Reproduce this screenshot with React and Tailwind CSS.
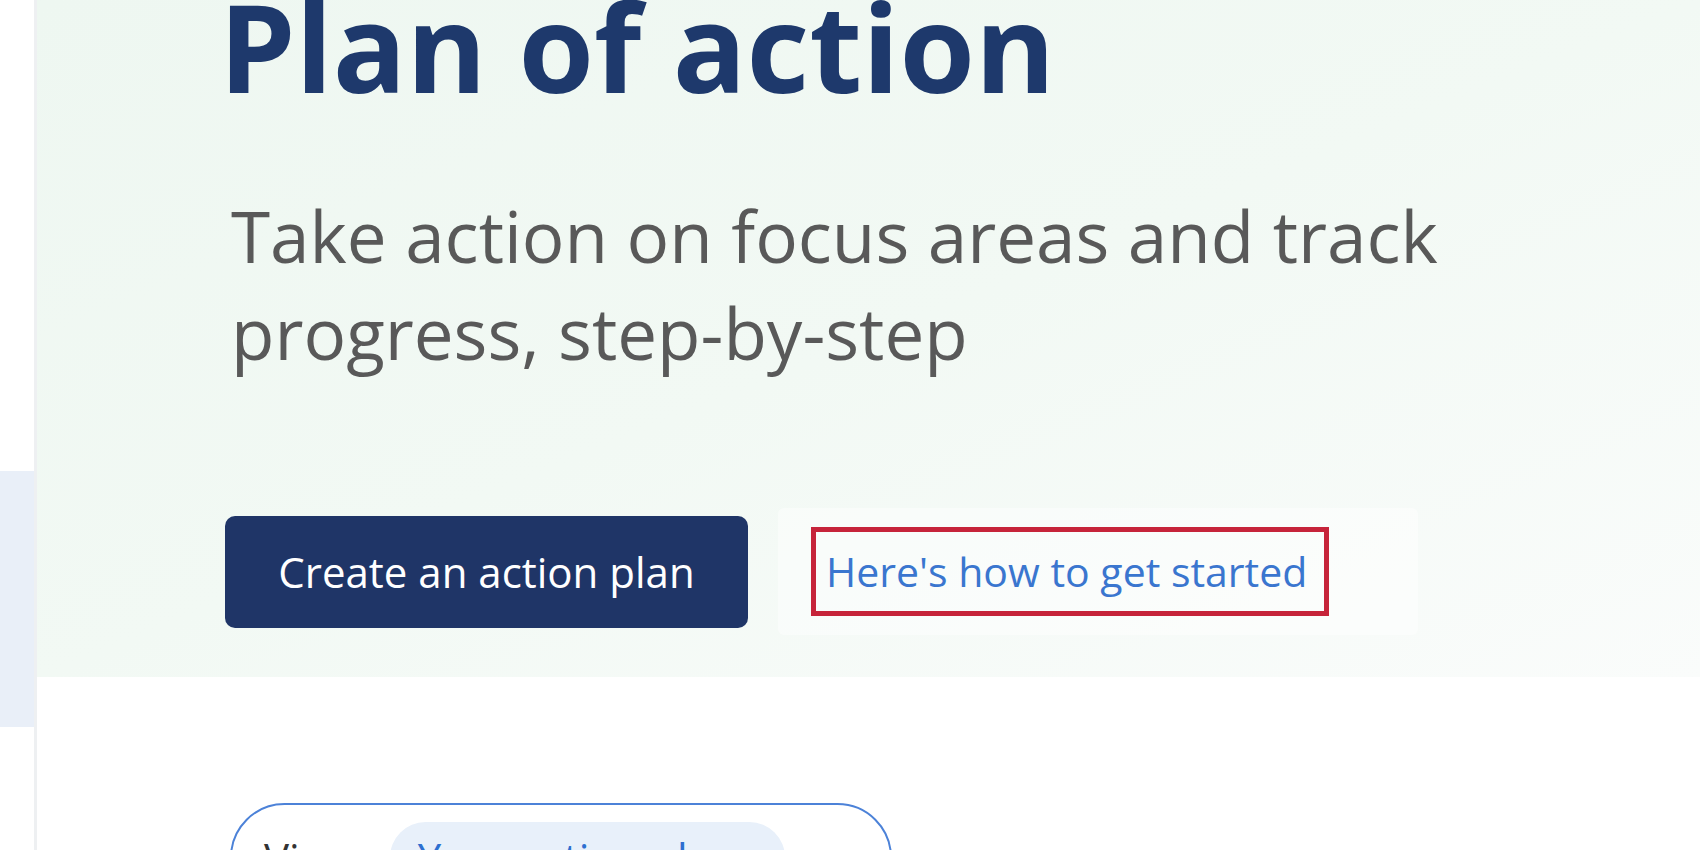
import React from 'react';

const HeroActions = () => (
  <div className="mt-[127px] flex items-center gap-[30px]">
    <button className="h-[112px] w-[523px] shrink-0 rounded-[10px] bg-[#1f3567] text-[42px] leading-[57px] text-white">
      Create an action plan
    </button>
    <div className="flex h-[127px] w-[640px] items-center rounded-[6px] bg-white/45 pl-[33px]">
      <a
        href="#"
        className="flex h-[89px] w-[518px] items-center border-[5px] border-[#c6243a] pl-[10px] text-[41px] leading-[57px] text-[#3a76cf]"
      >
        Here's how to get started
      </a>
    </div>
  </div>
);

const ViewSwitcher = () => (
  <div className="pl-[193px] pt-[126px]">
    <div className="flex w-[662px] items-center rounded-full border-2 border-[#4c82d8] py-[17px] pl-[32px]">
      <span className="text-[42px] leading-[57px] text-[#333333]">View</span>
      <span className="ml-[34px] rounded-full bg-[#e8f0fa] px-[28px] py-[7px] text-[42px] leading-[57px] text-[#2e6fd0]">
        Your action plans
      </span>
    </div>
  </div>
);

export default function App() {
  return (
    <div className="flex h-[850px] w-[1700px] overflow-hidden bg-white font-['Open_Sans','Noto_Sans',sans-serif]">
      {/* collapsed side nav */}
      <aside className="flex w-[37px] shrink-0 flex-col border-r-[3px] border-[#eef0f2]">
        <div className="h-[471px]" />
        <div className="h-[256px] bg-[#e9eff8]" />
      </aside>

      <main className="flex flex-1 flex-col">
        <section className="h-[677px] shrink-0 bg-linear-to-br from-[#eef7f1] via-[#f2f9f4] to-[#fafcfb] pl-[188px]">
          <h1 className="-ml-[6px] -mt-[15px] text-[122px] font-bold leading-none text-[#1e396c]">
            Plan of action
          </h1>
          <p className="ml-[6px] mt-[80px] text-[71px] leading-[97px] text-[#595959]">
            Take action on focus areas and track
            <br />
            progress, step-by-step
          </p>
          <HeroActions />
        </section>

        <ViewSwitcher />
      </main>
    </div>
  );
}
